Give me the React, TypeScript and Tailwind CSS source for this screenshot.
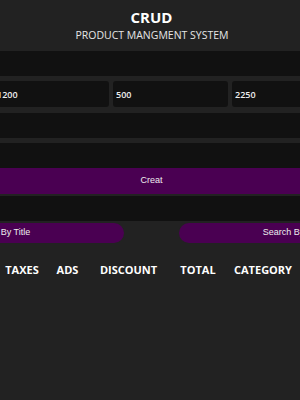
import React from 'react';

const heads = [
  { label: 'PRICE', w: 'w-[50px]' },
  { label: 'TAXES', w: 'w-[46px]' },
  { label: 'ADS', w: 'w-[45px]' },
  { label: 'DISCOUNT', w: 'w-[77px]' },
  { label: 'TOTAL', w: 'w-[62px]' },
  { label: 'CATEGORY', w: 'w-[68px]' },
  { label: 'UPDATE', w: 'w-[60px]' },
];

export default function App() {
  return (
    <div className="w-[300px] h-[400px] overflow-hidden bg-[#222222] text-white">
      <header className="h-[51px] pt-[6px] flex flex-col items-center font-['Open_Sans',sans-serif]">
        <h2 className="text-[15px] font-bold leading-[22px] ml-[3px]">CRUD</h2>
        <p className="text-[10.5px] leading-[14px] text-[#e6e6e6] ml-[4px]">PRODUCT MANGMENT SYSTEM</p>
      </header>

      <div className="w-[551px] -ml-[124px] flex flex-col font-['Open_Sans',sans-serif]">
        <input className="h-[25px] w-full bg-[#111111] rounded-[3px] outline-none" placeholder="" />

        <div className="mt-[5px] ml-[118px] flex gap-[4px]">
          {['1200', '500', '2250', ''].map((v, i) => (
            <input
              key={i}
              readOnly
              value={v}
              className="h-[26px] w-[115px] shrink-0 bg-[#111111] rounded-[3px] px-[3px] text-[9px] font-semibold text-[#eeeeee] outline-none"
            />
          ))}
        </div>

        <input className="mt-[6px] h-[25px] w-full bg-[#111111] rounded-[3px] outline-none" />
        <input className="mt-[5px] h-[25px] w-full bg-[#111111] rounded-[3px] outline-none" />

        <button className="mt-[0px] h-[26px] w-full bg-[#4a0052] rounded-[13px] text-[9px] text-[#eeeeee] font-['Liberation_Sans',Arial,sans-serif]">
          Creat
        </button>

        <input className="mt-[2px] h-[25px] w-full bg-[#111111] rounded-[3px] outline-none" />

        <div className="mt-[2px] flex justify-between">
          <button className="h-[20px] w-[248px] bg-[#4a0052] rounded-full text-[9px] text-[#eeeeee] font-['Liberation_Sans',Arial,sans-serif]">
            Search By Title
          </button>
          <button className="h-[20px] w-[248px] bg-[#4a0052] rounded-full text-[9px] text-[#eeeeee] font-['Liberation_Sans',Arial,sans-serif]">
            Search By Category
          </button>
        </div>
      </div>

      <div className="mt-[20px] -ml-[51px] flex font-['Open_Sans',sans-serif]">
        {heads.map((h) => (
          <div key={h.label} className={`${h.w} shrink-0 text-center text-[11px] font-bold leading-[14px]`}>
            {h.label}
          </div>
        ))}
      </div>
    </div>
  );
}
